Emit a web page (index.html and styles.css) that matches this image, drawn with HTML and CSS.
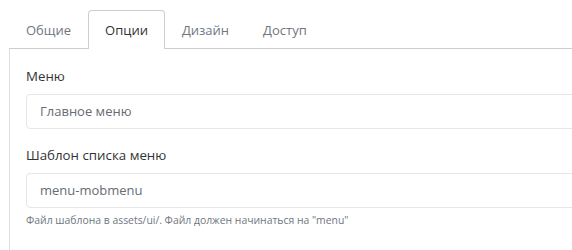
FILE: index.html
```html
<!DOCTYPE html>
<html lang="ru">
<head>
<meta charset="utf-8">
<link rel="stylesheet" href="styles.css">
</head>
<body>
<div class="tabs-wrap">
  <ul class="tabs">
    <li class="tab">Общие</li>
    <li class="tab active">Опции</li>
    <li class="tab">Дизайн</li>
    <li class="tab">Доступ</li>
  </ul>
  <div class="panel">
    <div class="field">
      <label class="label">Меню</label>
      <div class="input">Главное меню</div>
    </div>
    <div class="field">
      <label class="label">Шаблон списка меню</label>
      <div class="input">menu-mobmenu</div>
      <div class="help">Файл шаблона в assets/ui/. Файл должен начинаться на "menu"</div>
    </div>
  </div>
</div>
</body>
</html>
```
FILE: styles.css
```css
html, body {
  margin: 0;
  padding: 0;
  background: #fff;
  overflow: hidden;
}
body {
  font-family: "Open Sans", "Noto Sans", sans-serif;
  color: #333;
  font-size: 13px;
}
.tabs-wrap {
  padding: 10px 0 0 9px;
  width: 600px;
}
.tabs {
  list-style: none;
  margin: 0;
  padding: 0;
  display: flex;
  border-bottom: 1px solid #c9ced6;
  height: 38px;
}
.tab {
  padding: 0 16px;
  line-height: 38px;
  height: 38px;
  color: #6f7680;
  border: 1px solid transparent;
  border-bottom: none;
  box-sizing: border-box;
}
.tab.active {
  color: #333;
  background: #fff;
  border-color: #c9ced6;
  border-radius: 4px 4px 0 0;
  height: 39px;
  margin-bottom: -1px;
}
.panel {
  border-left: 1px solid #dcdfe4;
  padding: 18px 0 0 16px;
  height: 201px;
  box-sizing: border-box;
}
.field {
  display: flex;
  flex-direction: column;
}
.field + .field {
  margin-top: 17px;
}
.label {
  font-size: 13.3px;
  color: #333;
  line-height: 18px;
  margin-bottom: 9px;
}
.input {
  height: 35px;
  box-sizing: border-box;
  border: 1px solid #e4e6ea;
  border-radius: 4px;
  padding: 0 13px;
  line-height: 33px;
  color: #666c73;
  font-size: 13px;
}
.help {
  font-size: 10.4px;
  color: #6f7680;
  margin-top: 5px;
  line-height: 15px;
}
```
